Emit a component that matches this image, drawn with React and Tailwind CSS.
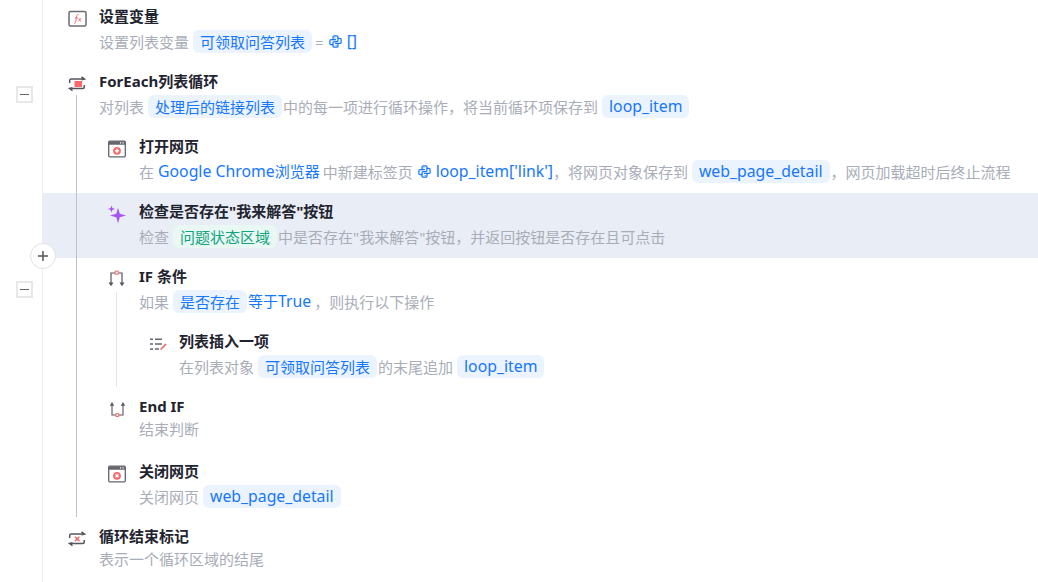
import React from 'react'
import { TbBrandPython } from 'react-icons/tb'

const Latin = ({ children }) => <span className="text-[15.8px]">{children}</span>

const Pill = ({ children, green }) => (
    <span className={`-mt-[2px] ml-1 mr-px inline-flex h-[23px] items-center rounded-md px-[7px] pt-[2px] ${green ? 'bg-[#e9f8f2] text-[#10a37f]' : 'bg-[#ebf3ff] text-[#1677ff]'}`}>
        {children}
    </span>
)

const Blue = ({ children }) => <span className="text-[#1677ff]">{children}</span>

const Py = () => <TbBrandPython className="mx-1 -mt-[2px] text-[#1677ff]" size={15} strokeWidth={2} />

const FxIcon = () => (
    <svg width="20" height="18" viewBox="0 0 20 18" fill="none">
        <rect x="1" y="1.5" width="17" height="14.500" rx="1.500" stroke="#6b6b75" strokeWidth="1.500" />
        <path d="M10.500 4.500c-1.200-.4-1.600.3-1.800 1.500L7.600 12c-.2 1-.7 1.500-1.600 1.200M6.800 8h3.200M10.500 8l2.500 3.500M13.200 8l-2.800 3.500" stroke="#f0686c" strokeWidth=".9" />
    </svg>
)

const LoopIcon = ({ end }) => (
    <svg width="18" height="18" viewBox="0 0 18 18" fill="none">
        <path d="M1.700 8V5.500A1.500 1.500 0 0 1 3.200 4H16.500M13.500 1.800 16.500 4l-3 .8" stroke="#55555f" strokeWidth="1.500" />
        <path d="M16.300 10v2A1.500 1.500 0 0 1 14.800 13.500H1.500M4.500 15.700 1.500 13.500l3-.8" stroke="#55555f" strokeWidth="1.500" />
        {end
            ? <path d="M7 6.700l4.400 4.400M11.400 6.700 7 11.100" stroke="#f0686c" strokeWidth="1.500" />
            : <rect x="6.500" y="6" width="7.500" height="6" fill="#f8686c" />}
    </svg>
)

const PageIcon = ({ close }) => (
    <svg width="18" height="18" viewBox="0 0 18 18" fill="none">
        <rect x=".7" y="1.200" width="16.600" height="15.600" rx="1" fill="#fff" stroke="#65656f" strokeWidth="1.300" />
        <path d="M.7 2.200a1 1 0 0 1 1-1h14.600a1 1 0 0 1 1 1v2.600H.7z" fill="#65656f" />
        <rect x="12" y="2.300" width="1.200" height="1.200" fill="#fff" />
        <rect x="14.500" y="2.300" width="1.200" height="1.200" fill="#fff" />
        <circle cx="9" cy="10.800" r="3.900" fill="#f8686c" />
        {close
            ? <path d="M7.500 9.300l3 3M10.500 9.300l-3 3" stroke="#fff" strokeWidth="1.300" />
            : <path d="M6.900 10.800h4.200M9 8.700v4.200" stroke="#fff" strokeWidth="1.400" />}
    </svg>
)

const SparkIcon = () => (
    <svg width="20" height="20" viewBox="0 0 20 20" fill="#a855f7">
        <path d="M10 2.800 11.800 8.700 18 10.500 11.800 12.300 10 18.200 8.200 12.300 2 10.500 8.200 8.700z" />
        <path d="M3.500.6 4.400 3.100 7 4 4.400 4.900 3.500 7.400 2.600 4.900 0 4 2.600 3.100z" />
    </svg>
)

const IfIcon = () => (
    <svg width="18" height="18" viewBox="0 0 18 18" fill="none">
        <path d="M3 13V3h4M10.500 3H14v10" stroke="#55555f" strokeWidth="1.200" />
        <path d="M.5 12.500h5L3 16.300zM11.500 12.500h5L14 16.300z" fill="#55555f" />
        <rect x="7.200" y="1.200" width="3" height="3" fill="#fff" stroke="#f0686c" strokeWidth="1" />
    </svg>
)

const EndIfIcon = () => (
    <svg width="18" height="18" viewBox="0 0 18 18" fill="none">
        <path d="M4 5v10h4M11 15h4V5" stroke="#55555f" strokeWidth="1.100" />
        <path d="M1.800 5.800h4.400L4 2zM12.800 5.800h4.400L15 2z" fill="#55555f" />
        <rect x="8" y="13.700" width="2.700" height="2.700" fill="#fff" stroke="#f0686c" strokeWidth="1" />
    </svg>
)

const ListIcon = () => (
    <svg width="20" height="18" viewBox="0 0 20 18" fill="none">
        <path d="M2 4.300h3M7 4.300h7M2 9h3M7 9h7M2 14h3M7 14h4" stroke="#65656f" strokeWidth="1.400" />
        <path d="M12.700 14.500 18 9" stroke="#f0686c" strokeWidth="1.800" />
    </svg>
)

const rows = [
    {
        depth: 0, icon: <FxIcon />, title: '设置变量',
        desc: <>设置列表变量<Pill>可领取问答列表</Pill><span className="ml-0.5">=</span><Py /><Blue><Latin>[]</Latin></Blue></>,
    },
    {
        depth: 0, icon: <LoopIcon />, title: 'ForEach列表循环',
        desc: <>对列表<Pill>处理后的链接列表</Pill>中的每一项进行循环操作，将当前循环项保存到<Pill><Latin>loop_item</Latin></Pill></>,
    },
    {
        depth: 1, icon: <PageIcon />, title: '打开网页',
        desc: <>在<span className="w-1" /><Blue><Latin>Google Chrome</Latin>浏览器</Blue><span className="w-[3px]" />中新建标签页<Py /><Blue><Latin>loop_item['link']</Latin></Blue>，将网页对象保存到<Pill><Latin>web_page_detail</Latin></Pill>，网页加载超时后终止流程</>,
    },
    {
        depth: 1, icon: <SparkIcon />, title: '检查是否存在"我来解答"按钮', active: true,
        desc: <>检查<Pill green>问题状态区域</Pill>中是否存在"我来解答"按钮，并返回按钮是否存在且可点击</>,
    },
    {
        depth: 1, icon: <IfIcon />, title: 'IF 条件',
        desc: <>如果<Pill>是否存在</Pill><Blue>等于<Latin>True</Latin></Blue><span className="w-[3px]" />，则执行以下操作</>,
    },
    {
        depth: 2, icon: <ListIcon />, title: '列表插入一项',
        desc: <>在列表对象<Pill>可领取问答列表</Pill>的末尾追加<Pill><Latin>loop_item</Latin></Pill></>,
    },
    { depth: 1, icon: <EndIfIcon />, title: 'End IF', plain: true, desc: <>结束判断</> },
    {
        depth: 1, icon: <PageIcon close />, title: '关闭网页',
        desc: <>关闭网页<Pill><Latin>web_page_detail</Latin></Pill></>,
    },
    { depth: 0, icon: <LoopIcon end />, title: '循环结束标记', plain: true, desc: <>表示一个循环区域的结尾</> },
]

const depthPad = ['pl-[25px]', 'pl-[65px]', 'pl-[105px]']

const Row = ({ row }) => (
    <div className={`flex h-[65px] pt-[6px] ${depthPad[row.depth]} ${row.active ? 'bg-[#e9edf5]' : ''}`}>
        <div className="w-[31px] shrink-0 pt-[6px]">{row.icon}</div>
        <div className="min-w-0">
            <div className="h-[24px] text-[15px] leading-[24px] font-bold text-[#1f2430] whitespace-nowrap">{row.title}</div>
            <div className={`flex h-[24px] items-center text-[15px] text-[#a8adb8] whitespace-nowrap ${row.plain ? '-mt-px' : 'mt-px pt-[2px]'}`}>{row.desc}</div>
        </div>
    </div>
)

const Collapse = ({ className }) => (
    <div className={`absolute left-[16px] flex h-[17px] w-[17px] items-center justify-center border-2 border-[#e8e8e8] bg-white ${className}`}>
        <div className="h-px w-[9px] bg-[#666]" />
    </div>
)

export default function App() {
    return (
        <div className="relative h-[582px] w-[1038px] overflow-hidden bg-white">
            <div className="ml-[42px] -mt-[2px] border-l border-[#eeeeee]" style={{ fontFamily: '"Noto Sans", "Noto Sans CJK SC", sans-serif' }}>
                {rows.map((row, i) => <Row key={i} row={row} />)}
            </div>
            {/* tree lines and controls over the rows */}
            <div className="absolute left-[76px] top-[95px] h-[422px] w-px bg-[#bcc3d0]" />
            <div className="absolute left-[116px] top-[292px] h-[95px] w-px bg-[#e4e6eb]" />
            <Collapse className="top-[86px]" />
            <Collapse className="top-[281px]" />
            <div className="absolute left-[30px] top-[243px] flex h-[26px] w-[26px] items-center justify-center rounded-full border border-[#e2e2e2] bg-white">
                <svg width="12" height="12" viewBox="0 0 12 12"><path d="M6 1v10M1 6h10" stroke="#555" strokeWidth="1.500" /></svg>
            </div>
        </div>
    )
}
